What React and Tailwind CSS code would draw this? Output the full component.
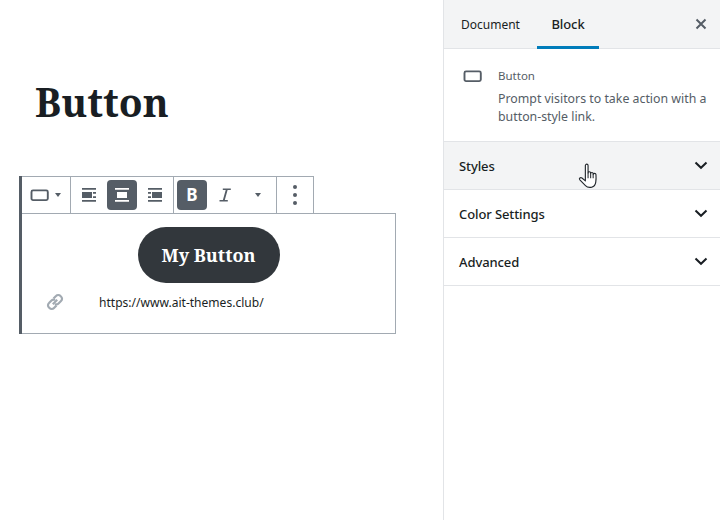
import React from "react";

function BtnIcon({ className = "" }) {
  return (
    <svg width="20" height="14" viewBox="0 0 20 14" className={className} fill="none">
      <rect x="1.500" y="2.400" width="16.300" height="9.700" rx="1.500" stroke="currentColor" strokeWidth="1.900" />
    </svg>
  );
}
function Caret() {
  return (
    <svg width="8" height="6" viewBox="0 0 8 6" className="text-[#555d66]"><path d="M1 1h6L4 5z" fill="currentColor" /></svg>
  );
}
function AlignLeft() {
  return (
    <svg width="16" height="16" viewBox="0 0 16 16" fill="currentColor">
      <path d="M1 1h14v1.800H1zM1 13h14v1.800H1zM1 5h10v6H1zM12 5h3v1.700h-3zM12 9.300h3V11h-3z" />
    </svg>
  );
}
function AlignCenter() {
  return (
    <svg width="16" height="16" viewBox="0 0 16 16" fill="currentColor">
      <path d="M1 1h14v1.800H1zM1 13h14v1.800H1zM3 5h10v6H3z" />
    </svg>
  );
}
function AlignRight() {
  return (
    <svg width="16" height="16" viewBox="0 0 16 16" fill="currentColor">
      <path d="M1 1h14v1.800H1zM1 13h14v1.800H1zM5 5h10v6H5zM1 5h3v1.700H1zM1 9.300h3V11H1z" />
    </svg>
  );
}
function Italic() {
  return (
    <svg width="14" height="16" viewBox="0 0 14 16" fill="currentColor">
      <path d="M4.800 1.500h8v1.600h-3.200L6.800 13h3v1.500H1.500V13h3.400L7.700 3.100H4.800z" />
    </svg>
  );
}
function Chevron() {
  return (
    <svg width="14" height="10" viewBox="0 0 14 10" fill="none" className="text-[#191e23]">
      <path d="M1.500 1.500l5.500 5.300 5.500-5.300" stroke="currentColor" strokeWidth="2" />
    </svg>
  );
}
function Hand() {
  return (
    <svg width="22" height="27" viewBox="0 0 20 26" className="absolute left-[578px] top-[163px]">
      <path
        d="M6.500 2.500c0-1.800 2.600-1.800 2.600 0V9.500c.1-1.500 2.500-1.400 2.500 0v.6c.1-1.400 2.400-1.300 2.400.1v.8c.1-1.300 2.600-1.300 2.700.1.200 2.600.1 5.400-.2 7.300-.3 2.200-1.600 4.300-3.800 4.800-2.500.5-4.700 0-6.100-1.400L1.200 16.300c-1.200-1.300.6-3 2-1.900l3.300 2.800z"
        fill="#fff" stroke="#23282d" strokeWidth="1.100" strokeLinejoin="round"
      />
      <path d="M9.100 9.500v5.200M11.600 10.100v4.700M14 11v3.800" stroke="#23282d" strokeWidth="1" fill="none" />
    </svg>
  );
}

function PanelRow({ label, hover }) {
  return (
    <div className={`flex h-[48px] items-center justify-between border-b border-[#e2e4e7] pl-[15px] pr-[12px] text-[13px] font-medium tracking-[-0.1px] text-[#191e23] ${hover ? "bg-[#f3f4f5]" : ""}`}>
      <span className="pt-[2px]">{label}</span>
      <Chevron />
    </div>
  );
}

export default function App() {
  return (
    <div className="relative flex h-[520px] w-[720px] overflow-hidden bg-white font-['Noto_Sans','Open_Sans',sans-serif]">
      <main className="w-[444px] shrink-0 border-r border-[#e2e4e7] pl-[19px]">
        <h1 className="pl-[16px] pt-[77px] font-['Noto_Serif','DejaVu_Serif',serif] text-[39px] font-bold leading-[50px] text-[#191e23]">
          Button
        </h1>
        <div className="mt-[49px] flex w-[377px] flex-col border-l-[3px] border-[#555d66]">
          <div className="flex h-[38px] w-[292px] border-y border-r border-[#a2aab2] text-[#555d66]">
            <div className="flex w-[49px] shrink-0 items-center gap-[4px] border-r border-[#a2aab2] pl-[8px]">
              <BtnIcon />
              <Caret />
            </div>
            <div className="flex w-[103px] shrink-0 items-center gap-[3px] border-r border-[#a2aab2] pl-[3px]">
              <div className="flex h-[30px] w-[30px] items-center justify-center"><AlignLeft /></div>
              <div className="flex h-[30px] w-[30px] items-center justify-center rounded-[4px] bg-[#555d66] text-white"><AlignCenter /></div>
              <div className="flex h-[30px] w-[30px] items-center justify-center"><AlignRight /></div>
            </div>
            <div className="flex w-[103px] shrink-0 items-center border-r border-[#a2aab2] pl-[3px]">
              <div className="flex h-[30px] w-[30px] items-center justify-center rounded-[4px] bg-[#555d66] text-[17px] font-bold text-white">B</div>
              <div className="flex h-[30px] w-[35px] items-center justify-center"><Italic /></div>
              <div className="flex h-[30px] w-[31px] items-center justify-center"><Caret /></div>
            </div>
            <div className="flex flex-1 flex-col items-center justify-center gap-[4px]">
              <span className="h-[4px] w-[4px] rounded-full bg-[#555d66]" />
              <span className="h-[4px] w-[4px] rounded-full bg-[#555d66]" />
              <span className="h-[4px] w-[4px] rounded-full bg-[#555d66]" />
            </div>
          </div>
          <div className="-mt-px flex h-[121px] flex-col border-y border-r border-[#a2aab2]">
            <div className="flex justify-center pt-[13px]">
              <div className="flex h-[56px] w-[142px] items-center justify-center rounded-[28px] bg-[#32373c] font-['Noto_Serif','DejaVu_Serif',serif] text-[18px] font-bold text-white">
                My Button
              </div>
            </div>
            <div className="mt-[5px] flex h-[28px] items-center pl-[24px] text-[12.050px] text-[#191e23]">
              <svg width="18" height="18" viewBox="0 0 18 18" fill="none" stroke="#a2aab2" strokeWidth="2.200" className="shrink-0">
                <path d="M7.500 5.500l2.500-2.500a3 3 0 0 1 4.500 0l.5.500a3 3 0 0 1 0 4.500l-2.500 2.500a3 3 0 0 1-3.500.5" />
                <path d="M10.500 12.500l-2.500 2.500a3 3 0 0 1-4.500 0l-.5-.500a3 3 0 0 1 0-4.500l2.500-2.500a3 3 0 0 1 3.500-.5" />
                <path d="M6.800 11.200l4.400-4.400" />
              </svg>
              <span className="ml-[35px] pt-[2px]">https://www.ait-themes.club/</span>
            </div>
          </div>
        </div>
      </main>
      <aside className="flex-1">
        <div className="flex h-[49px] items-center border-b border-[#e2e4e7] bg-[#f3f4f5] text-[13px] text-[#191e23]">
          <div className="flex h-full w-[93px] items-center pl-[17px] pt-[2px] text-[12px]">Document</div>
          <div className="flex h-[49px] w-[62px] items-center justify-center border-b-[3px] border-[#007cba] pt-[5px] font-medium tracking-[-0.1px]">Block</div>
          <svg width="12" height="12" viewBox="0 0 12 12" className="ml-auto mr-[13px] text-[#555d66]">
            <path d="M1.500 1.500l9 9M10.500 1.500l-9 9" stroke="currentColor" strokeWidth="2" fill="none" />
          </svg>
        </div>
        <div className="flex h-[93px] gap-[15px] border-b border-[#e2e4e7] pl-[19px] pt-[18px] text-[#555d66]">
          <BtnIcon className="mt-[2px] shrink-0" />
          <div className="w-[216px]">
            <div className="text-[11.500px] leading-[18px]">Button</div>
            <div className="mt-[5px] text-[12.350px] leading-[18px]">Prompt visitors to take action with a button-style link.</div>
          </div>
        </div>
        <PanelRow label="Styles" hover />
        <PanelRow label="Color Settings" />
        <PanelRow label="Advanced" />
      </aside>
      <Hand />
    </div>
  );
}
